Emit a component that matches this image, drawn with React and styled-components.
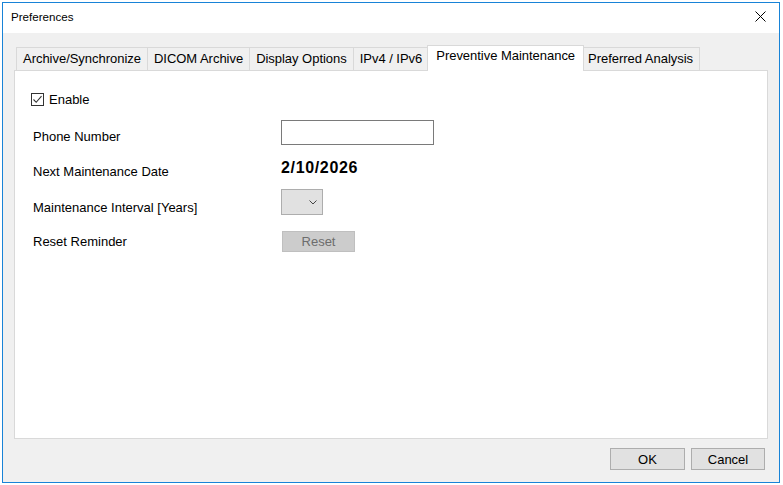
import styled, { createGlobalStyle } from "styled-components";

const GlobalStyle = createGlobalStyle`
  html, body {
    margin: 0;
    padding: 0;
    background: #ffffff;
  }
  body {
    font-family: "Liberation Sans", Arial, sans-serif;
    font-size: 13px;
    color: #000;
  }
`;

const Window = styled.div`
  box-sizing: border-box;
  width: 778px;
  height: 481px;
  margin: 2px 0 0 2px;
  border: 1px solid #1883d7;
  display: flex;
  flex-direction: column;
  background: #f0f0f0;
`;

const TitleBar = styled.div`
  height: 30px;
  flex: none;
  background: #ffffff;
  display: flex;
  align-items: center;
  justify-content: space-between;
  padding: 0 13px 3px 8px;
  box-sizing: border-box;
  font-size: 11.6px;
`;

const CloseIcon = styled.svg`
  width: 11px;
  height: 11px;
  display: block;
`;

const Body = styled.div`
  flex: 1;
  display: flex;
  flex-direction: column;
  padding: 12px 11px 12px 11px;
`;

const TabStrip = styled.div`
  height: 25px;
  flex: none;
  display: flex;
  align-items: flex-end;
  padding-left: 2px;
`;

const Tab = styled.div`
  box-sizing: border-box;
  position: relative;
  height: ${p => (p.$active ? "26px" : "23px")};
  margin-bottom: ${p => (p.$active ? "-1px" : "0")};
  margin-left: ${p => (p.$active ? "-2px" : "-1px")};
  margin-right: ${p => (p.$active ? "-2px" : "0")};
  padding: ${p => (p.$active ? "2px 8px 0 8px" : "3px 6px 0 6px")};
  z-index: ${p => (p.$active ? 2 : 1)};
  background: ${p => (p.$active ? "#ffffff" : "#f0f0f0")};
  border: 1px solid #d9d9d9;
  border-bottom: none;
  white-space: nowrap;
  line-height: 15px;
  letter-spacing: -0.03px;

  &:first-child {
    margin-left: 0;
  }
`;

const Panel = styled.div`
  box-sizing: border-box;
  height: 369px;
  flex: none;
  background: #ffffff;
  border: 1px solid #d9d9d9;
  padding: 22px 0 0 16px;
  display: flex;
  flex-direction: column;
`;

const CheckRow = styled.label`
  display: flex;
  align-items: center;
  gap: 5px;
  height: 13px;
  margin-bottom: 13px;
`;

const CheckBox = styled.span`
  box-sizing: border-box;
  width: 13px;
  height: 13px;
  border: 1px solid #333333;
  background: #ffffff;
  display: flex;
  align-items: center;
  justify-content: center;
`;

const Row = styled.div`
  display: grid;
  grid-template-columns: 248px auto;
  align-items: center;
  height: 35px;
  padding-left: 2px;
`;

const Control = styled.div`
  margin-bottom: ${p => (p.$lift || 0) * 2}px;
  margin-left: ${p => p.$indent || 0}px;
  display: flex;
`;

const TextInput = styled.div`
  box-sizing: border-box;
  width: 153px;
  height: 25px;
  border: 1px solid #7a7a7a;
  background: #ffffff;
`;

const DateText = styled.div`
  font-weight: bold;
  font-size: 16px;
  letter-spacing: 0.65px;
  line-height: 18px;
`;

const Select = styled.div`
  box-sizing: border-box;
  width: 42px;
  height: 26px;
  border: 1px solid #adadad;
  background: #e1e1e1;
  display: flex;
  align-items: center;
  justify-content: flex-end;
  padding-right: 5px;
`;

const Button = styled.div`
  box-sizing: border-box;
  width: ${p => p.$width || 75}px;
  height: ${p => p.$height || 22}px;
  border: 1px solid ${p => (p.$disabled ? "#bfbfbf" : "#adadad")};
  background: ${p => (p.$disabled ? "#cccccc" : "#e1e1e1")};
  color: ${p => (p.$disabled ? "#6d6d6d" : "#000000")};
  display: flex;
  align-items: center;
  justify-content: center;
  font-size: 13px;
`;

const Footer = styled.div`
  display: flex;
  justify-content: flex-end;
  gap: 6px;
  margin-top: 9px;
  padding-right: 3px;
`;

const tabs = [
  "Archive/Synchronize",
  "DICOM Archive",
  "Display Options",
  "IPv4 / IPv6",
  "Preventive Maintenance",
  "Preferred Analysis",
];

export default function App() {
  return (
    <>
      <GlobalStyle />
      <Window>
        <TitleBar>
          <span>Preferences</span>
          <CloseIcon viewBox="0 0 11 11">
            <path d="M0.5 0.5 L10.5 10.5 M10.5 0.5 L0.5 10.5" stroke="#000" strokeWidth="1" />
          </CloseIcon>
        </TitleBar>
        <Body>
          <TabStrip>
            {tabs.map(t => (
              <Tab key={t} $active={t === "Preventive Maintenance"}>{t}</Tab>
            ))}
          </TabStrip>
          <Panel>
            <CheckRow>
              <CheckBox>
                <svg width="11" height="11" viewBox="0 0 11 11">
                  <path d="M1.5 5.5 L4.2 8.3 L9.5 2.2" fill="none" stroke="#333" strokeWidth="1.1" />
                </svg>
              </CheckBox>
              <span>Enable</span>
            </CheckRow>
            <Row>
              <span>Phone Number</span>
              <Control $lift={4.5}>
                <TextInput />
              </Control>
            </Row>
            <Row>
              <span>Next Maintenance Date</span>
              <Control $lift={4}>
                <DateText>2/10/2026</DateText>
              </Control>
            </Row>
            <Row>
              <span>Maintenance Interval [Years]</span>
              <Control $lift={5}>
                <Select>
                  <svg width="8" height="5" viewBox="0 0 8 5">
                    <path d="M0.5 0.5 L4 4 L7.5 0.5" fill="none" stroke="#444" strokeWidth="1" />
                  </svg>
                </Select>
              </Control>
            </Row>
            <Row>
              <span>Reset Reminder</span>
              <Control $indent={1}>
                <Button $disabled $width={73} $height={21}>Reset</Button>
              </Control>
            </Row>
          </Panel>
          <Footer>
            <Button>OK</Button>
            <Button $width={74}>Cancel</Button>
          </Footer>
        </Body>
      </Window>
    </>
  );
}
